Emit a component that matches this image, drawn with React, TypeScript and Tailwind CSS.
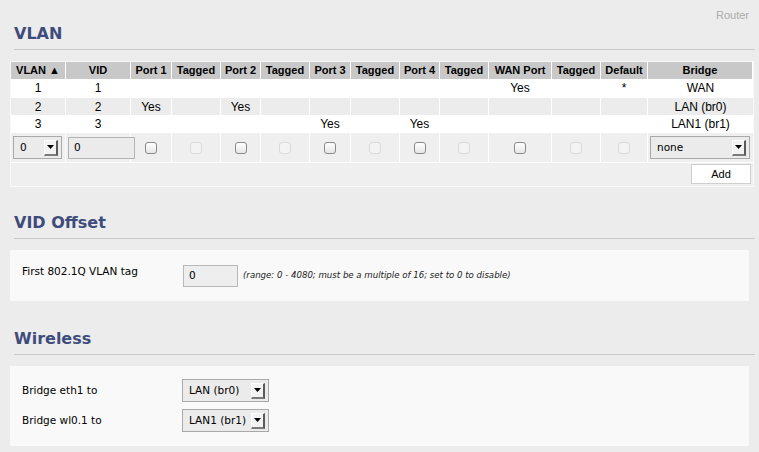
import React from "react";

const COLS = "grid grid-cols-[55px_65px_41px_49px_40px_49px_41px_49px_40px_49px_63px_49px_47px_105px]";

const HEAD = ["VLAN ▲", "VID", "Port 1", "Tagged", "Port 2", "Tagged", "Port 3", "Tagged", "Port 4", "Tagged", "WAN Port", "Tagged", "Default", "Bridge"];

const ROWS: string[][] = [
  ["1", "1", "", "", "", "", "", "", "", "", "Yes", "", "*", "WAN"],
  ["2", "2", "Yes", "", "Yes", "", "", "", "", "", "", "", "", "LAN (br0)"],
  ["3", "3", "", "", "", "", "Yes", "", "Yes", "", "", "", "", "LAN1 (br1)"],
];

function Heading({ children, top }: { children: React.ReactNode; top: string }) {
  return (
    <div className={`${top} ml-[4px] mr-[4px] border-b border-[#c9c9c9] pb-[5px] text-[16px] font-bold leading-[20px] text-[#3e4c7c] font-['DejaVu_Sans',Verdana,sans-serif]`}>
      {children}
    </div>
  );
}

function Arrow() {
  return (
    <div className="flex h-[16px] w-[14px] shrink-0 items-center justify-center border-l border-t border-white border-r-2 border-b-2 border-r-[#5a5a5a] border-b-[#7a7a7a] bg-[#f3f3f3]">
      <svg width="7" height="4" viewBox="0 0 7 4">
        <polygon points="0,0 7,0 3.5,4" fill="#000" />
      </svg>
    </div>
  );
}

function Select({ value, cls }: { value: string; cls: string }) {
  return (
    <div className={`${cls} flex h-[23px] items-center justify-between border border-[#a9a9a9] bg-[#ebebeb] pl-[6px] pr-[3px] text-[10.5px] text-black font-['DejaVu_Sans',Verdana,sans-serif]`}>
      <span>{value}</span>
      <Arrow />
    </div>
  );
}

function Check({ enabled }: { enabled: boolean }) {
  return enabled ? (
    <div className="h-[12px] w-[12px] rounded-[3px] border border-[#8a8a8a] bg-gradient-to-b from-white to-[#e6e6e6]" />
  ) : (
    <div className="h-[12px] w-[12px] rounded-[3px] border border-[#dadada] bg-[#f3f3f3]" />
  );
}

export default function App() {
  return (
    <div className="min-h-[452px] w-full bg-[#ececec] pl-[10px] pt-[8px] pb-[5px] text-black font-['Liberation_Sans',Arial,sans-serif]">
      <div className="mr-[10px] h-[14px] text-right text-[11px] leading-[14px] text-[#ababab]">Router</div>

      <Heading top="mt-[2px]">VLAN</Heading>

      <div className="mt-[11px] mr-[5px] border border-[#f9f9f9] bg-[#efefef]">
        <div className={`${COLS} bg-[#c8c8c8]`}>
          {HEAD.map((h, i) => (
            <div key={i} className="flex h-[17px] items-center justify-center border-r border-white text-[11px] font-bold leading-none">
              {h}
            </div>
          ))}
        </div>
        {ROWS.map((r, ri) => (
          <div key={ri} className={`${COLS} ${ri === 1 ? "bg-[#ececec]" : "bg-white"}`}>
            {r.map((c, ci) => (
              <div key={ci} className={`flex h-[18px] items-center justify-center border-white text-[12px] leading-none ${ci < 13 ? "border-r" : ""} ${ri === 1 ? "border-t" : ""}`}>
                {c}
              </div>
            ))}
          </div>
        ))}
        <div className={`${COLS} border-b border-white`}>
          <div className="flex h-[29px] items-center border-r border-white pl-[2px]">
            <Select value="0" cls="w-[49px]" />
          </div>
          <div className="flex h-[29px] items-center border-r border-white pl-[2px]">
            <div className="relative flex h-[22px] w-[67px] shrink-0 items-center border border-[#b3b3b3] bg-[#ebebeb] pl-[5px] text-[10.5px] font-['DejaVu_Sans',Verdana,sans-serif]">0</div>
          </div>
          {[true, false, true, false, true, false, true, false, true, false, false].map((en, i) => (
            <div key={i} className="flex h-[29px] items-center justify-center border-r border-white">
              <Check enabled={en} />
            </div>
          ))}
          <div className="flex h-[29px] items-center pl-[2px]">
            <Select value="none" cls="w-[100px]" />
          </div>
        </div>
        <div className="flex h-[23px] items-start justify-end pr-[2px] pt-[1px]">
          <button className="h-[20px] w-[60px] border border-[#cfcfcf] bg-white text-[11px] leading-none text-black">Add</button>
        </div>
      </div>

      <Heading top="mt-[26px]">VID Offset</Heading>

      <div className="mt-[11px] mr-[10px] flex h-[51px] items-center bg-[#f9f9f9] pl-[12px] font-['DejaVu_Sans',Verdana,sans-serif]">
        <div className="mb-[9px] w-[161px] shrink-0 text-[10.5px] leading-[13px]">First 802.1Q VLAN tag</div>
        <div className="flex h-[22px] w-[55px] shrink-0 items-center border border-[#b8b8b8] bg-[#eeeeee] pl-[5px] text-[10.5px]">0</div>
        <div className="ml-[5px] text-[8.6px] italic text-[#222]">(range: 0 - 4080; must be a multiple of 16; set to 0 to disable)</div>
      </div>

      <Heading top="mt-[28px]">Wireless</Heading>

      <div className="mt-[11px] mr-[10px] flex flex-col gap-[7px] bg-[#f9f9f9] pb-[14px] pl-[12px] pt-[13px] font-['DejaVu_Sans',Verdana,sans-serif]">
        <div className="flex items-center">
          <div className="w-[160px] shrink-0 text-[10.5px]">Bridge eth1 to</div>
          <Select value="LAN (br0)" cls="w-[87px]" />
        </div>
        <div className="flex items-center">
          <div className="w-[160px] shrink-0 text-[10.5px]">Bridge wl0.1 to</div>
          <Select value="LAN1 (br1)" cls="w-[87px]" />
        </div>
      </div>
    </div>
  );
}
